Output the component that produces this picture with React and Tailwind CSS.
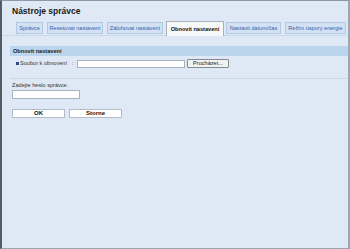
import React from 'react';

const tabs = [
  { name: 'Správce', w: 'w-[27px]', ml: 'ml-[14px]' },
  { name: 'Resetovat nastavení', w: 'w-[56px]', ml: 'ml-[4px]' },
  { name: 'Zálohovat nastavení', w: 'w-[56px]', ml: 'ml-[4px]' },
  { name: 'Obnovit nastavení', w: 'w-[58px]', ml: 'ml-[3px]', active: true },
  { name: 'Nastavit datum/čas', w: 'w-[55px]', ml: 'ml-[2px]' },
  { name: 'Režim úspory energie', w: 'w-[61px]', ml: 'ml-[4px]' },
];

export default function App() {
  return (
    <div className="w-[350px] h-[249px] overflow-hidden bg-[#dfe9f5] border-t border-t-[#8d98a6] border-l-2 border-l-[#555b63] border-r-2 border-r-[#9ba7b5] border-b border-b-[#99a5b3] font-['Liberation_Sans',Arial,sans-serif] text-[#222]">
      {/* Title */}
      <div className="h-[21px] pl-[10px] pt-[5px] text-[8.5px] leading-[10px] font-bold text-[#1a1a1a]">
        Nástroje správce
      </div>

      {/* Tabs */}
      <div className="flex items-end h-[14px] border-b border-[#c9d6e4]">
        {tabs.map(tab => (
          <div
            key={tab.name}
            className={`${tab.w} ${tab.ml} flex items-center justify-center text-[5.6px] whitespace-nowrap ${tab.active ? 'h-[15px] -mb-px bg-[#f7f8fa] border border-[#a9b0b8] border-b-0 font-bold text-[#111]' : 'h-[12px] mb-px bg-[#d2e2f3] border border-[#b3c9e1] text-[#3b5ca8]'}`}
          >
            {tab.name}
          </div>
        ))}
      </div>

      {/* Section header */}
      <div className="mt-[10px] ml-[8px] h-[10px] bg-[#bcd5ee] pl-[3px] flex items-center text-[5.6px] font-bold text-[#1a1a1a]">
        Obnovit nastavení
      </div>

      {/* File row */}
      <div className="mt-[3px] ml-[14px] h-[9px] flex items-center text-[5.6px] text-[#333]">
        <span className="w-[3px] h-[3px] bg-[#2d4a8a]"></span>
        <span className="ml-[1px] w-[52px]">Soubor k obnovení</span>
        <span className="w-[5px]">:</span>
        <div className="w-[108px] h-[8px] bg-white border border-[#a7b3c0]"></div>
        <div className="ml-[2px] w-[42px] h-[9px] bg-[#f2f2f0] border border-[#7f8a96] rounded-[1px] flex items-center justify-center text-[#222]">
          Procházet...
        </div>
      </div>

      {/* Separator */}
      <div className="mt-[10px] ml-[8px] border-t border-[#cbd7e4]"></div>

      {/* Password */}
      <div className="ml-[10px] mt-[3px] text-[5.6px] leading-[7px] text-[#333]">Zadejte heslo správce.</div>
      <div className="ml-[10px] mt-[1px] w-[68px] h-[9px] bg-white border border-[#a7b3c0]"></div>

      {/* Buttons */}
      <div className="ml-[10px] mt-[10px] flex gap-[4px]">
        <div className="w-[53px] h-[9px] bg-white border border-[#b3bcc6] flex items-center justify-center text-[6px] font-bold text-[#111]">OK</div>
        <div className="w-[53px] h-[9px] bg-white border border-[#b3bcc6] flex items-center justify-center text-[6px] font-bold text-[#111]">Storne</div>
      </div>
    </div>
  );
}
